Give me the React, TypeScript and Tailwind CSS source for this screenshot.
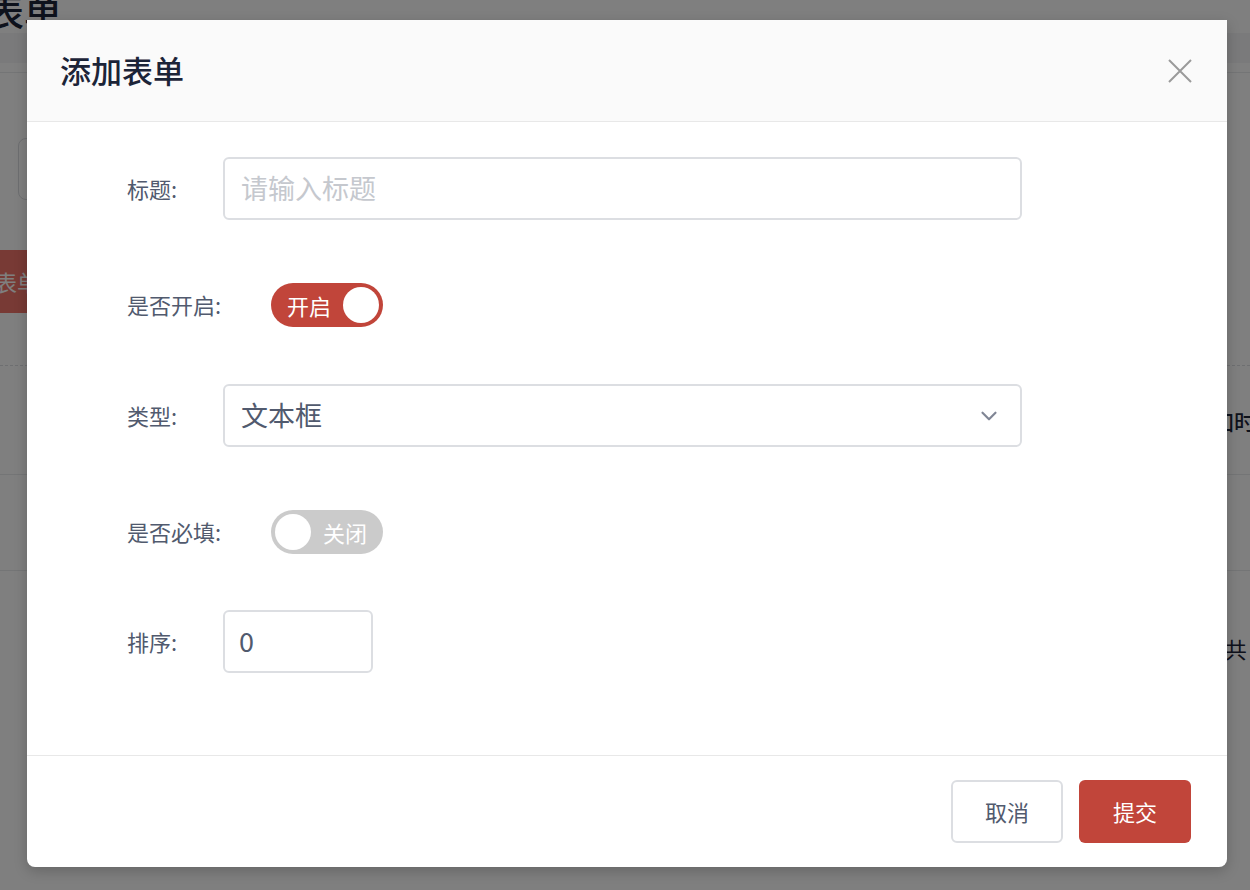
import { ChevronDown } from 'lucide-react';

const font = "font-['Noto_Sans_CJK_SC','Noto_Sans',sans-serif]";

function Switch({ on, label }: { on: boolean; label: string }) {
  return (
    <div
      className={`flex h-[44px] w-[112px] items-center rounded-full px-[4px] ${
        on ? 'bg-[#c1453a] flex-row' : 'bg-[#cbcbcb] flex-row-reverse'
      }`}
    >
      <span className="flex-1 text-center text-[22px] leading-none text-white">{label}</span>
      <span className="h-[36px] w-[36px] rounded-full bg-white" />
    </div>
  );
}

function Row({ label, children, className }: { label: string; children: React.ReactNode; className?: string }) {
  return (
    <div className={`flex h-[63px] items-center ${className ?? ''}`}>
      <span className="w-[96px] shrink-0 whitespace-nowrap text-[22px] text-[#515a6e]">{label}:</span>
      {children}
    </div>
  );
}

export default function App() {
  return (
    <div className={`relative h-[890px] w-[1250px] overflow-hidden bg-white ${font}`}>
      {/* page behind the dialog */}
      <div className="flex h-full flex-col">
        <div className="-mt-[14px] ml-[-14px] h-[47px] text-[38px] font-medium leading-[47px] text-[#1c2438]">表单</div>
        <div className="h-[30px] bg-[#f4f4f6]" />
        <div className="h-[10px] border-b border-[#e8eaec]" />
        <div className="ml-[18px] mt-[65px] h-[62px] w-[240px] shrink-0 rounded-lg border border-[#dcdee2]" />
        <div className="ml-[-40px] mt-[50px] flex h-[63px] w-[80px] shrink-0 items-center justify-end rounded-md bg-[#f0756a] text-[22px] text-white">
          <span className="mr-[1px]">表单</span>
        </div>
        <div className="mt-[52px] border-b border-dashed border-[#dcdee2]" />
        <div className="flex h-[108px] shrink-0 items-center justify-end">
          <span className="mr-[-6px] text-[22px] font-medium text-[#1c2438]">添加时</span>
        </div>
        <div className="h-[96px] shrink-0 border-t border-[#e8eaec]" />
        <div className="flex h-[156px] shrink-0 items-center justify-end border-t border-[#e8eaec]">
          <span className="mr-[-14px] text-[22px] text-[#1c2438]">共 1</span>
        </div>
      </div>

      {/* mask */}
      <div className="absolute inset-0 bg-black/50" />

      {/* dialog */}
      <div className="absolute left-[27px] top-[20px] flex h-[847px] w-[1200px] flex-col rounded-b-lg bg-white shadow-[0_4px_14px_rgba(0,0,0,0.2)]">
        <div className="flex h-[102px] items-center justify-between border-b border-[#e8e8e8] bg-[#fafafa] pl-[33px] pr-[35px]">
          <h2 className="text-[31px] font-medium text-[#1c2438]">添加表单</h2>
          <svg width="24" height="24" viewBox="0 0 24 24" className="text-[#9a9a9a]">
            <path d="M1 1L23 23M23 1L1 23" stroke="currentColor" strokeWidth="2" fill="none" />
          </svg>
        </div>

        <div className="flex h-[633px] flex-col pl-[100px] pt-[35px]">
          <Row label="标题">
            <div className="flex h-[63px] w-[799px] items-center rounded-md border-2 border-[#dcdee2] px-[16px] text-[27px] text-[#c5c8ce]">
              请输入标题
            </div>
          </Row>
          <Row label="是否开启" className="mt-[53px]">
            <div className="ml-[48px]">
              <Switch on label="开启" />
            </div>
          </Row>
          <Row label="类型" className="mt-[48px]">
            <div className="flex h-[63px] w-[799px] items-center justify-between rounded-md border-2 border-[#dcdee2] pl-[16px] pr-[18px] text-[27px] text-[#515a6e]">
              <span>文本框</span>
              <ChevronDown size={26} strokeWidth={2} className="text-[#808695]" />
            </div>
          </Row>
          <Row label="是否必填" className="mt-[53px]">
            <div className="ml-[48px]">
              <Switch on={false} label="关闭" />
            </div>
          </Row>
          <Row label="排序" className="mt-[47px]">
            <div className="flex h-[63px] w-[150px] items-center rounded-md border-2 border-[#dcdee2] px-[14px] text-[27px] text-[#515a6e]">
              0
            </div>
          </Row>
        </div>

        <div className="flex flex-1 items-center justify-end gap-[16px] border-t border-[#e8e8e8] pr-[36px]">
          <button className="h-[63px] w-[112px] rounded-md border-2 border-[#dcdee2] bg-white text-[22px] text-[#515a6e]">
            取消
          </button>
          <button className="h-[63px] w-[112px] rounded-md bg-[#c1453a] text-[22px] text-white">提交</button>
        </div>
      </div>
    </div>
  );
}
